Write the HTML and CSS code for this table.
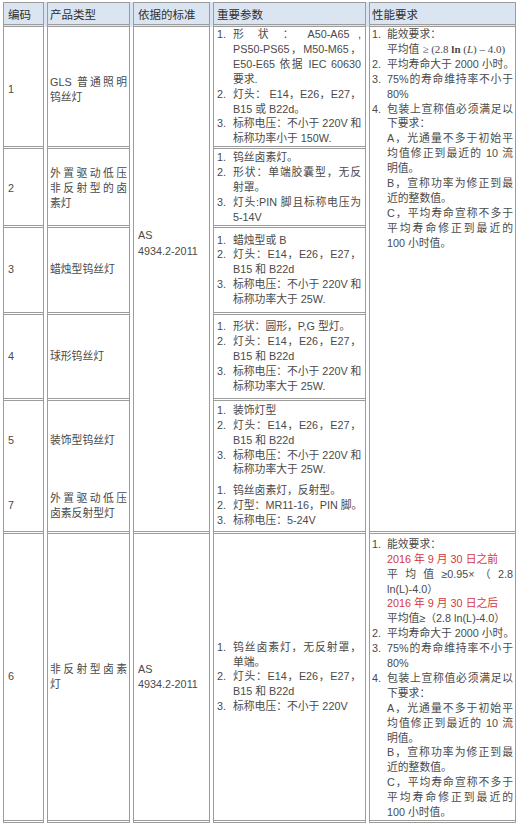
FILE: index.html
```html
<!DOCTYPE html>
<html lang="zh-CN">
<head>
<meta charset="utf-8">
<title>钨丝灯与卤素灯标准要求</title>
<link rel="stylesheet" href="styles.css">
</head>
<body>
<table class="spec">
  <thead>
    <tr class="hd">
      <th class="c1 w1">编码</th>
      <th class="c2 w2">产品类型</th>
      <th class="c3 w3">依据的标准</th>
      <th class="c4 w4">重要参数</th>
      <th class="c5 w5">性能要求</th>
    </tr>
  </thead>
  <tbody>
    <tr class="r1">
      <td class="c1 down6">1</td>
      <td class="c2 down6"><span class="l j">GLS 普通照明</span><span class="l">钨丝灯</span></td>
      <td class="c3 std" rowspan="6"><span class="l">AS</span><span class="l">4934.2-2011</span></td>
      <td class="c4 top">
        <div class="it"><span class="no">1.</span><div class="tx"><span class="l j">形 状 ： A50-A65 ,</span><span class="l j">PS50-PS65，M50-M65，</span><span class="l j">E50-E65 依据 IEC 60630</span><span class="l">要求.</span></div></div>
        <div class="it"><span class="no">2.</span><div class="tx"><span class="l j">灯头： E14，E26，E27，</span><span class="l">B15 或 B22d。</span></div></div>
        <div class="it"><span class="no">3.</span><div class="tx"><span class="l j">标称电压：不小于 220V 和</span><span class="l">标称功率小于 150W.</span></div></div>
      </td>
      <td class="c5 perf" rowspan="6">
        <div class="it"><span class="no">1.</span><div class="tx"><span class="l">能效要求：</span><span class="l">平均值 <span class="math">≥ (2.8 <b>ln</b> (<i>L</i>) – 4.0)</span></span></div></div>
        <div class="it"><span class="no">2.</span><div class="tx"><span class="l">平均寿命大于 2000 小时。</span></div></div>
        <div class="it"><span class="no">3.</span><div class="tx"><span class="l j">75%的寿命维持率不小于</span><span class="l">80%</span></div></div>
        <div class="it"><span class="no">4.</span><div class="tx"><span class="l j">包装上宣称值必须满足以</span><span class="l">下要求：</span><span class="l j">A，光通量不多于初始平</span><span class="l j">均值修正到最近的 10 流</span><span class="l">明值。</span><span class="l j">B，宣称功率为修正到最</span><span class="l">近的整数值。</span><span class="l j">C，平均寿命宣称不多于</span><span class="l j">平均寿命修正到最近的</span><span class="l">100 小时值。</span></div></div>
      </td>
    </tr>
    <tr class="r2">
      <td class="c1 down3">2</td>
      <td class="c2 down3"><span class="l j">外置驱动低压</span><span class="l j">非反射型的卤</span><span class="l">素灯</span></td>
      <td class="c4 top pad1">
        <div class="it"><span class="no">1.</span><div class="tx"><span class="l">钨丝卤素灯。</span></div></div>
        <div class="it"><span class="no">2.</span><div class="tx"><span class="l j">形状：单端胶囊型，无反</span><span class="l">射罩。</span></div></div>
        <div class="it"><span class="no">3.</span><div class="tx"><span class="l j">灯头:PIN 脚且标称电压为</span><span class="l">5-14V</span></div></div>
      </td>
    </tr>
    <tr class="r3">
      <td class="c1">3</td>
      <td class="c2"><span class="l">蜡烛型钨丝灯</span></td>
      <td class="c4">
        <div class="it"><span class="no">1.</span><div class="tx"><span class="l">蜡烛型或 B</span></div></div>
        <div class="it"><span class="no">2.</span><div class="tx"><span class="l j">灯头：E14，E26，E27，</span><span class="l">B15 和 B22d</span></div></div>
        <div class="it"><span class="no">3.</span><div class="tx"><span class="l j">标称电压：不小于 220V 和</span><span class="l">标称功率大于 25W.</span></div></div>
      </td>
    </tr>
    <tr class="r4">
      <td class="c1">4</td>
      <td class="c2"><span class="l">球形钨丝灯</span></td>
      <td class="c4">
        <div class="it"><span class="no">1.</span><div class="tx"><span class="l">形状：圆形，P,G 型灯。</span></div></div>
        <div class="it"><span class="no">2.</span><div class="tx"><span class="l j">灯头：E14，E26，E27，</span><span class="l">B15 和 B22d</span></div></div>
        <div class="it"><span class="no">3.</span><div class="tx"><span class="l j">标称电压：不小于 220V 和</span><span class="l">标称功率大于 25W.</span></div></div>
      </td>
    </tr>
    <tr class="r5">
      <td class="c1">5</td>
      <td class="c2"><span class="l">装饰型钨丝灯</span></td>
      <td class="c4 top pad2">
        <div class="it"><span class="no">1.</span><div class="tx"><span class="l">装饰灯型</span></div></div>
        <div class="it"><span class="no">2.</span><div class="tx"><span class="l j">灯头：E14，E26，E27，</span><span class="l">B15 和 B22d</span></div></div>
        <div class="it"><span class="no">3.</span><div class="tx"><span class="l j">标称电压：不小于 220V 和</span><span class="l">标称功率大于 25W.</span></div></div>
      </td>
    </tr>
    <tr class="r7">
      <td class="c1">7</td>
      <td class="c2"><span class="l j">外置驱动低压</span><span class="l">卤素反射型灯</span></td>
      <td class="c4 top pad2">
        <div class="it"><span class="no">1.</span><div class="tx"><span class="l">钨丝卤素灯，反射型。</span></div></div>
        <div class="it"><span class="no">2.</span><div class="tx"><span class="l">灯型：MR11-16，PIN 脚。</span></div></div>
        <div class="it"><span class="no">3.</span><div class="tx"><span class="l">标称电压：5-24V</span></div></div>
      </td>
    </tr>
    <tr class="r6">
      <td class="c1">6</td>
      <td class="c2"><span class="l j">非反射型卤素</span><span class="l">灯</span></td>
      <td class="c3"><span class="l">AS</span><span class="l">4934.2-2011</span></td>
      <td class="c4">
        <div class="it"><span class="no">1.</span><div class="tx"><span class="l j">钨丝卤素灯，无反射罩，</span><span class="l">单端。</span></div></div>
        <div class="it"><span class="no">2.</span><div class="tx"><span class="l j">灯头：E14，E26，E27，</span><span class="l">B15 和 B22d</span></div></div>
        <div class="it"><span class="no">3.</span><div class="tx"><span class="l">标称电压：不小于 220V</span></div></div>
      </td>
      <td class="c5 top pad3">
        <div class="it"><span class="no">1.</span><div class="tx"><span class="l">能效要求：</span><span class="l red">2016 年 9 月 30 日之前</span><span class="l j">平 均 值 ≥0.95× （ 2.8</span><span class="l">ln(L)-4.0）</span><span class="l red">2016 年 9 月 30 日之后</span><span class="l">平均值≥（2.8 ln(L)-4.0）</span></div></div>
        <div class="it"><span class="no">2.</span><div class="tx"><span class="l">平均寿命大于 2000 小时。</span></div></div>
        <div class="it"><span class="no">3.</span><div class="tx"><span class="l j">75%的寿命维持率不小于</span><span class="l">80%</span></div></div>
        <div class="it"><span class="no">4.</span><div class="tx"><span class="l j">包装上宣称值必须满足以</span><span class="l">下要求：</span><span class="l j">A，光通量不多于初始平</span><span class="l j">均值修正到最近的 10 流</span><span class="l">明值。</span><span class="l j">B，宣称功率为修正到最</span><span class="l">近的整数值。</span><span class="l j">C，平均寿命宣称不多于</span><span class="l j">平均寿命修正到最近的</span><span class="l">100 小时值。</span></div></div>
      </td>
    </tr>
  </tbody>
</table>
</body>
</html>
```

FILE: styles.css
```css
html, body {
  margin: 0;
  padding: 0;
  background: #ffffff;
}

body {
  font-family: "Liberation Sans", "Noto Sans CJK SC", sans-serif;
  font-size: 10.8px;
  line-height: 14.9px;
  color: #4a4a4a;
}

.spec {
  border-collapse: separate;
  border-spacing: 3px 0;
  table-layout: fixed;
  width: 519px;
  margin-top: 2px;
}

.spec th,
.spec td {
  box-sizing: border-box;
  padding: 0;
  border-left: 1px solid #9c9c9c;
  border-right: 1px solid #9c9c9c;
  border-bottom: 3px double #9c9c9c;
  vertical-align: middle;
  text-align: left;
  font-weight: normal;
}

.spec th {
  background: #dbe5f1;
  border-top: 1px solid #9c9c9c;
  padding-top: 2px;
  font-family: "Noto Sans CJK SC", sans-serif;
  font-size: 11.5px;
  color: #2e2e2e;
  box-shadow: 3px 0 0 #dbe5f1;
}

.spec th:last-child {
  box-shadow: none;
}

.w1 { width: 41px; }
.w2 { width: 83px; }
.w3 { width: 77px; }
.w4 { width: 153px; }
.w5 { width: 147px; }

.hd { height: 25px; }
.r1 { height: 122px; }
.r2 { height: 77px; }
.r3 { height: 87px; }
.r4 { height: 86px; }
.r5 { height: 80px; }
.r7 { height: 53px; }
.r6 { height: 287px; }

.spec .r5 td { border-bottom: none; }

.spec .c1 { padding-left: 4px; }
.spec .c2 { padding-left: 2px; padding-right: 2px; }
.spec .c3 { padding-left: 4px; }
.spec .c4 { padding-left: 3px; padding-right: 4px; }
.spec .c5 { padding-left: 2px; padding-right: 2px; }

.spec td.top { vertical-align: top; }
.spec td.pad1 { padding-top: 1px; }
.spec td.pad2 { padding-top: 2px; }
.spec td.pad3 { padding-top: 3px; }
.spec td.down6 { padding-top: 6px; }
.spec td.down3 { padding-top: 3px; }

.spec td.std {
  vertical-align: top;
  padding-top: 200px;
  line-height: 16px;
}

.spec td.perf {
  vertical-align: top;
}

.l {
  display: block;
  white-space: nowrap;
}

.j {
  text-align: justify;
  text-align-last: justify;
}

.it {
  display: flex;
}

.no {
  flex: none;
  width: 16px;
}

.c5 .no {
  width: 15px;
}

.tx {
  flex: 1;
  min-width: 0;
}

.math {
  font-family: "Liberation Serif", serif;
  font-size: 11px;
}

.math b {
  font-weight: bold;
}

.math i {
  font-style: italic;
}

.red {
  color: #d4373d;
}
```
